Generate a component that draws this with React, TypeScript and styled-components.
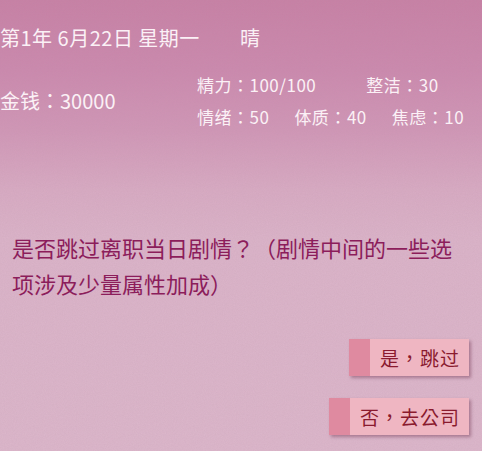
import React from "react";
import styled, { createGlobalStyle } from "styled-components";

const GlobalStyle = createGlobalStyle`
  html, body {
    margin: 0;
    padding: 0;
  }
  body {
    font-family: "Noto Sans CJK TC", "Noto Sans", sans-serif;
  }
`;

// fine paper grain laid over the gradient
const grain =
  "url(\"data:image/svg+xml;utf8,<svg xmlns='http://www.w3.org/2000/svg' width='160' height='160'><filter id='n'><feTurbulence type='fractalNoise' baseFrequency='0.9' numOctaves='2' stitchTiles='stitch'/><feColorMatrix values='0 0 0 0 0.5 0 0 0 0 0.3 0 0 0 0 0.4 0 0 0 0.22 0'/></filter><rect width='100%' height='100%' filter='url(%23n)'/></svg>\")";

interface Stat {
  label: string;
  value: string;
  gap?: number;
}

const statRows: Stat[][] = [
  [
    { label: "精力", value: "100/100" },
    { label: "整洁", value: "30", gap: 50 },
  ],
  [
    { label: "情绪", value: "50" },
    { label: "体质", value: "40", gap: 25 },
    { label: "焦虑", value: "10", gap: 25 },
  ],
];

const App: React.FC = () => {
  return (
    <Screen>
      <GlobalStyle />
      <Header>
        <DateLine>
          第1年 6月22日 星期一
          <Weather>晴</Weather>
        </DateLine>
        <StatusRow>
          <Money>金钱：30000</Money>
          <StatGrid>
            {statRows.map((row, i) => (
              <StatLine key={i}>
                {row.map((s) => (
                  <StatItem key={s.label} $gap={s.gap ?? 0}>
                    {s.label}：{s.value}
                  </StatItem>
                ))}
              </StatLine>
            ))}
          </StatGrid>
        </StatusRow>
      </Header>

      <Question>是否跳过离职当日剧情？（剧情中间的一些选项涉及少量属性加成）</Question>

      <Choices>
        <ChoiceButton $width={120}>是，跳过</ChoiceButton>
        <ChoiceButton $width={140}>否，去公司</ChoiceButton>
      </Choices>
    </Screen>
  );
};

const Screen = styled.div`
  width: 482px;
  height: 451px;
  overflow: hidden;
  display: flex;
  flex-direction: column;
  background-color: #dbb5c9;
  background-image: ${grain},
    linear-gradient(
      180deg,
      #c77fa4 0px,
      #cb88ad 70px,
      #d096b6 130px,
      #d8abc3 190px,
      #dbb4c9 240px,
      #dcb7cb 451px
    );
  background-size: 160px 160px, 100% 100%;
`;

const Header = styled.div`
  display: flex;
  flex-direction: column;
  gap: 24px;
  padding-top: 26px;
  color: #fbf1f6;
`;

const DateLine = styled.div`
  font-size: 20px;
  line-height: 24px;
  letter-spacing: 0.5px;
  white-space: pre;
`;

const Weather = styled.span`
  margin-left: 40px;
`;

const StatusRow = styled.div`
  display: flex;
  align-items: center;
`;

const Money = styled.div`
  width: 197px;
  font-size: 20px;
  line-height: 24px;
`;

const StatGrid = styled.div`
  display: flex;
  flex-direction: column;
  gap: 10px;
`;

const StatLine = styled.div`
  display: flex;
  font-size: 17px;
  line-height: 22px;
  letter-spacing: 0.5px;
`;

const StatItem = styled.span<{ $gap: number }>`
  margin-left: ${(p) => p.$gap}px;
`;

const Question = styled.p`
  margin: 101px 0 0;
  padding-left: 12px;
  width: 445px;
  font-size: 22px;
  line-height: 36px;
  color: #8c1d5b;
`;

const Choices = styled.div`
  display: flex;
  flex-direction: column;
  align-items: flex-end;
  gap: 22px;
  margin-top: 38px;
  padding-right: 13px;
`;

const ChoiceButton = styled.button<{ $width: number }>`
  width: ${(p) => p.$width}px;
  height: 37px;
  padding: 0 0 0 22px;
  border: none;
  background: linear-gradient(90deg, #df8aa0 0 21px, #efb6c2 21px);
  box-shadow: 2px 2px 3px rgba(110, 50, 80, 0.45);
  font-family: "Noto Sans CJK TC", "Noto Sans", sans-serif;
  font-size: 19px;
  letter-spacing: 1px;
  color: #8a1a2e;
  cursor: pointer;
`;

export default App;
